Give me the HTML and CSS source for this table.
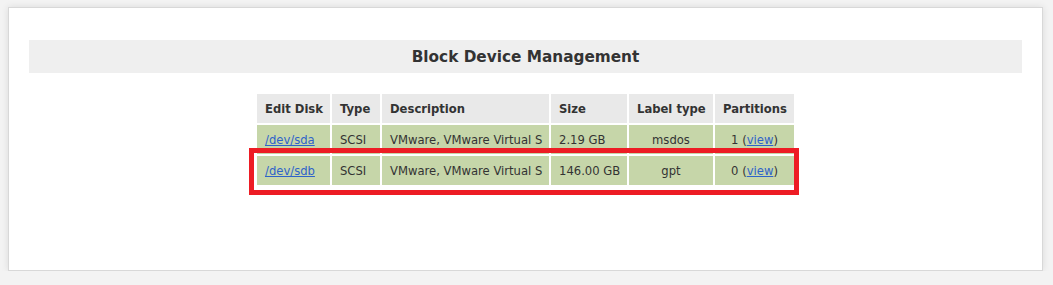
FILE: index.html
```html
<!DOCTYPE html>
<html>
<head>
<meta charset="utf-8">
<link rel="stylesheet" href="styles.css">
</head>
<body>
<div class="panel">
  <h1 class="title">Block Device Management</h1>
  <div class="table-wrap">
    <div class="holder">
      <table class="disks">
        <thead>
          <tr>
            <th class="c-disk">Edit Disk</th>
            <th class="c-type">Type</th>
            <th class="c-desc">Description</th>
            <th class="c-size">Size</th>
            <th class="c-label">Label type</th>
            <th class="c-part">Partitions</th>
          </tr>
        </thead>
        <tbody>
          <tr>
            <td><a href="#">/dev/sda</a></td>
            <td>SCSI</td>
            <td>VMware, VMware Virtual S</td>
            <td>2.19 GB</td>
            <td class="center">msdos</td>
            <td class="center">1 (<a href="#">view</a>)</td>
          </tr>
          <tr>
            <td><a href="#">/dev/sdb</a></td>
            <td>SCSI</td>
            <td>VMware, VMware Virtual S</td>
            <td>146.00 GB</td>
            <td class="center">gpt</td>
            <td class="center">0 (<a href="#">view</a>)</td>
          </tr>
        </tbody>
      </table>
      <div class="highlight"></div>
    </div>
  </div>
</div>
</body>
</html>
```

FILE: styles.css
```css
html, body {
  margin: 0;
  padding: 0;
}
body {
  background: #f3f3f3;
  font-family: "DejaVu Sans", Verdana, sans-serif;
  color: #333;
  padding-top: 7px;
}
.panel {
  box-sizing: border-box;
  margin-left: 8px;
  width: 1035px;
  height: 264px;
  background: #fff;
  border: 1px solid #d8d8d8;
  box-shadow: 0 0 7px rgba(0, 0, 0, 0.1);
  padding: 32px 20px 0 20px;
}
.title {
  margin: 0;
  height: 33px;
  line-height: 34px;
  background: #efefef;
  text-align: center;
  font-size: 15.3px;
  font-weight: bold;
  color: #333;
}
.table-wrap {
  display: flex;
  justify-content: center;
  margin-top: 19px;
}
.holder {
  position: relative;
}
.disks {
  border-collapse: separate;
  border-spacing: 2px;
  table-layout: fixed;
  width: 541px;
  font-size: 11.6px;
}
.disks th, .disks td {
  height: 29px;
  padding: 1px 8px 0 8px;
  box-sizing: border-box;
  text-align: left;
  white-space: nowrap;
  overflow: hidden;
}
.disks th {
  background: #e9e9e9;
  font-weight: bold;
  color: #333;
}
.disks td {
  background: #c6d6a9;
  color: #333;
}
.disks td.center {
  text-align: center;
}
.c-disk { width: 73px; }
.c-type { width: 48px; }
.c-desc { width: 167px; }
.c-size { width: 76px; }
.c-label { width: 84px; }
.c-part { width: 79px; }
.disks a {
  color: #2f63c9;
  text-decoration: underline;
}
.highlight {
  position: absolute;
  box-sizing: border-box;
  left: -6px;
  top: 56px;
  width: 550px;
  height: 47px;
  border: 5px solid #ed1c24;
  pointer-events: none;
}
```
